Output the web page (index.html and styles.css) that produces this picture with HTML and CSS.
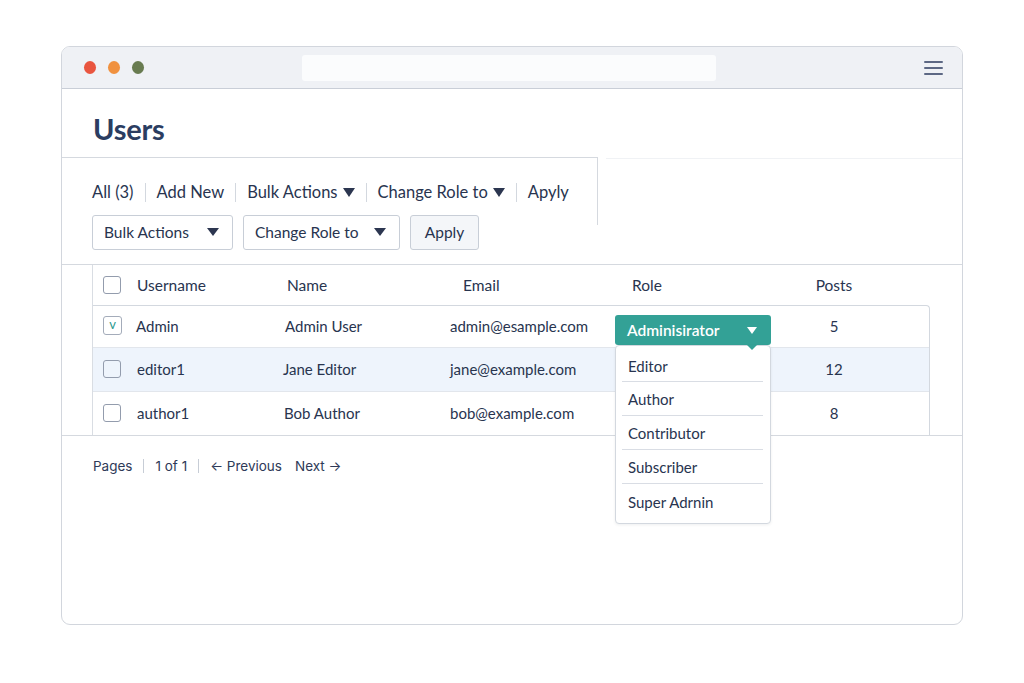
FILE: index.html
```html
<!DOCTYPE html>
<html>
<head>
<meta charset="utf-8">
<link rel="stylesheet" href="styles.css">
</head>
<body>
<div class="window">
  <div class="titlebar">
    <div class="dots"><span class="dot red"></span><span class="dot orange"></span><span class="dot green"></span></div>
    <div class="address"></div>
    <div class="burger"><span></span><span></span><span></span></div>
  </div>
  <div class="content">
    <h1 class="title">Users</h1>
    <div class="toolbar">
      <div class="toolbar-box">
        <div class="filters">
          <span>All (3)</span><i class="sep"></i>
          <span>Add New</span><i class="sep"></i>
          <span class="drop">Bulk Actions <b class="caret"></b></span><i class="sep"></i>
          <span class="drop">Change Role to <b class="caret"></b></span><i class="sep"></i>
          <span>Apyly</span>
        </div>
        <div class="bulk">
          <div class="select w1"><span>Bulk Actions</span><b class="caret sm"></b></div>
          <div class="select w2"><span>Change Role to</span><b class="caret sm"></b></div>
          <button class="btn">Apply</button>
        </div>
      </div>
      <div class="toolbar-rest"></div>
    </div>
    <div class="table-wrap">
      <div class="table">
        <div class="row head">
          <div class="c-cb"><span class="cb"></span></div>
          <div class="c-user">Username</div>
          <div class="h-name">Name</div>
          <div class="h-email">Email</div>
          <div class="h-role">Role</div>
          <div class="c-posts">Posts</div>
        </div>
        <div class="body">
          <div class="row r1">
            <div class="c-cb"><span class="cb checked">v</span></div>
            <div class="c-user">Admin</div>
            <div class="c-name">Admin User</div>
            <div class="c-email">admin@esample.com</div>
            <div class="c-role">
              <div class="role-btn"><span>Adminisirator</span><b class="caret white"></b><i class="notch"></i></div>
              <ul class="role-menu">
                <li>Editor</li>
                <li>Author</li>
                <li>Contributor</li>
                <li>Subscriber</li>
                <li>Super Adrnin</li>
              </ul>
            </div>
            <div class="c-posts">5</div>
          </div>
          <div class="row r2">
            <div class="c-cb"><span class="cb"></span></div>
            <div class="c-user">editor1</div>
            <div class="c-name n2">Jane Editor</div>
            <div class="c-email">jane@example.com</div>
            <div></div>
            <div class="c-posts">12</div>
          </div>
          <div class="row r3">
            <div class="c-cb"><span class="cb"></span></div>
            <div class="c-user">author1</div>
            <div class="c-name n3">Bob Author</div>
            <div class="c-email">bob@example.com</div>
            <div></div>
            <div class="c-posts">8</div>
          </div>
        </div>
      </div>
    </div>
    <div class="pager">
      <span>Pages</span><i class="psep"></i><span>1 of 1</span><i class="psep"></i><span>&larr; Previous</span><span class="next">Next &rarr;</span>
    </div>
  </div>
</div>
</body>
</html>
```

FILE: styles.css
```css
* { box-sizing: border-box; }
html, body { margin: 0; padding: 0; background: #ffffff; }
body {
  font-family: Lato, "Noto Sans", sans-serif;
  color: #28344f;
  width: 1024px;
  height: 683px;
  overflow: hidden;
}

.window {
  margin: 46px 0 0 61px;
  width: 902px;
  height: 579px;
  border: 1px solid #d2d6dd;
  border-radius: 9px;
  overflow: hidden;
  background: #fff;
}

.titlebar {
  height: 42px;
  background: #eff1f5;
  border-bottom: 1px solid #c9ced7;
  display: flex;
  align-items: center;
  padding: 0 19px 0 22px;
}
.dots { display: flex; gap: 12px; }
.dot { width: 12px; height: 13px; border-radius: 50%; display: block; }
.red { background: #e9553f; }
.orange { background: #f0913f; }
.green { background: #687b50; }
.address {
  margin-left: 158px;
  width: 414px;
  height: 26px;
  background: #fbfcfd;
  border-radius: 3px;
}
.burger { margin-left: auto; display: flex; flex-direction: column; gap: 4px; width: 19px; }
.burger span { display: block; height: 2px; background: #5d6884; border-radius: 1px; }

.title {
  margin: 22px 0 0 31px;
  font-size: 29px;
  line-height: 36px;
  font-weight: 700;
  color: #2b3d61;
  letter-spacing: -0.2px;
}

.toolbar { display: flex; margin-top: 10px; }
.toolbar-box {
  width: 536px;
  height: 68px;
  border-top: 1px solid #d5d9df;
  border-right: 1px solid #d5d9df;
  padding: 24px 0 0 30px;
}
.toolbar-rest { flex: 1; margin-left: 8px; border-top: 1px solid #f0f2f5; margin-top: 1px; height: 0; }

.filters {
  display: flex;
  align-items: center;
  gap: 11px;
  font-size: 16.5px;
  line-height: 20px;
  white-space: nowrap;
}
.filters .drop { display: inline-flex; align-items: center; gap: 5px; }
.sep { display: block; width: 1px; height: 19px; background: #d3d8df; }

.caret {
  display: inline-block;
  width: 0; height: 0;
  border-left: 6.5px solid transparent;
  border-right: 6.5px solid transparent;
  border-top: 9px solid #2c3650;
}
.caret.sm {
  border-left-width: 6px;
  border-right-width: 6px;
  border-top-width: 8px;
}
.caret.white { border-top-color: #ffffff; border-left-width: 5.5px; border-right-width: 5.5px; border-top-width: 7px; }

.bulk { display: flex; gap: 10px; margin-top: 13px; }
.select, .btn {
  height: 35px;
  border: 1px solid #c8ced7;
  border-radius: 3px;
  background: #fff;
  font-family: inherit;
  font-size: 15.5px;
  color: #28344f;
  display: flex;
  align-items: center;
  padding-bottom: 2px;
}
.select { justify-content: space-between; padding: 0 13px 2px 11px; }
.w1 { width: 141px; }
.w2 { width: 157px; }
.btn { width: 69px; justify-content: center; background: #f4f6f9; padding: 0 0 2px; }

.table-wrap {
  margin-top: 39px;
  border-top: 1px solid #d5d9df;
  border-bottom: 1px solid #d5d9df;
}
.table {
  margin-left: 30px;
  width: 838px;
  border-left: 1px solid #d9dde3;
}
.row {
  display: grid;
  grid-template-columns: 44px 148px 165px 165px 170px 98px 1fr;
  align-items: center;
  font-size: 15px;
  color: #28344f;
}
.row.head { height: 40px; font-size: 15.5px; padding-bottom: 1px; }
.c-cb { padding-left: 10px; display: flex; }
.cb {
  width: 18px; height: 18px;
  border: 1.5px solid #939cad;
  border-radius: 3px;
  display: flex;
  align-items: center;
  justify-content: center;
  font-size: 13px;
  color: #2d9a8f;
  line-height: 1;
}
.cb.checked { width: 19px; height: 19px; border-color: #a4acba; padding-bottom: 2px; }
.h-name { padding-left: 2px; }
.h-email { padding-left: 13px; }
.h-role { padding-left: 17px; }
.c-posts { text-align: center; }
.n2 { margin-left: -2px; }
.n3 { margin-left: -1px; }

.body {
  border-top: 1px solid #d3d8df;
  border-right: 1px solid #d3d8df;
  border-top-right-radius: 4px;
}
.body .row { border-bottom: 1px solid #e2e6ec; padding-bottom: 2px; }
.body .row:last-child { border-bottom: none; }
.r1 { height: 42px; padding-bottom: 3px; }
.r2 { height: 44px; background: #eef4fc; }
.r3 { height: 43px; }
.r1 .c-user { margin-left: -1px; }

.c-role { position: relative; align-self: stretch; }
.role-btn {
  position: relative;
  margin-top: 9px;
  width: 156px;
  height: 30px;
  background: #33a196;
  border-radius: 3px;
  color: #ffffff;
  font-size: 15.5px;
  font-weight: 600;
  display: flex;
  align-items: center;
  justify-content: space-between;
  padding: 0 14px 0 12px;
}
.notch {
  position: absolute;
  right: 14px;
  bottom: -5px;
  width: 0; height: 0;
  border-left: 5px solid transparent;
  border-right: 5px solid transparent;
  border-top: 5px solid #33a196;
  z-index: 3;
}
.role-menu {
  position: absolute;
  left: 0;
  top: 39px;
  z-index: 2;
  margin: 0;
  padding: 3px 0 0;
  list-style: none;
  width: 156px;
  height: 179px;
  background: #ffffff;
  border: 1px solid #d3d8df;
  border-radius: 4px;
  box-shadow: 0 1px 3px rgba(40, 50, 70, 0.08);
  font-size: 15px;
  color: #28344f;
}
.role-menu li {
  height: 34px;
  line-height: 34px;
  margin: 0 7px 0 6px;
  padding-left: 6px;
  border-bottom: 1px solid #d9dde4;
}
.role-menu li:first-child { height: 33px; }
.role-menu li:last-child { border-bottom: none; height: 38px; line-height: 36px; }

.pager {
  margin: 20px 0 0 31px;
  display: flex;
  align-items: center;
  gap: 11px;
  font-family: Inter, "Liberation Sans", sans-serif;
  font-size: 13.5px;
  line-height: 20px;
  color: #2e3a58;
}
.psep { display: block; width: 1px; height: 14px; background: #c7cdd6; }
.pager .next { margin-left: 2px; }
```
